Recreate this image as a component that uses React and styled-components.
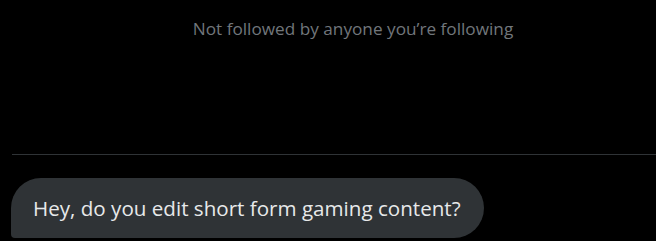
import React from 'react';
import styled, { createGlobalStyle } from 'styled-components';

const GlobalStyle = createGlobalStyle`
  html, body {
    margin: 0;
    padding: 0;
    background: #000;
  }
  body {
    font-family: "Open Sans", "Noto Sans", sans-serif;
    color: #e7e9ea;
  }
`;

const Page = styled.div`
  width: 656px;
  height: 241px;
  display: flex;
  flex-direction: column;
  overflow: hidden;
`;

const Header = styled.div`
  height: 154px;
  display: flex;
  justify-content: center;
  padding-top: 18px;
  padding-left: 50px;
  box-sizing: border-box;
`;

const Notice = styled.p`
  margin: 0;
  font-size: 17.2px;
  line-height: 22px;
  color: #71767b;
`;

const Divider = styled.hr`
  margin: 0 0 0 12px;
  border: none;
  height: 1px;
  background: #2f3336;
`;

const Thread = styled.div`
  padding: 23px 0 0 11px;
  display: flex;
`;

const Bubble = styled.div`
  background: #2f3336;
  color: #e7e9ea;
  height: 60px;
  display: flex;
  align-items: center;
  padding: 0 23px 0 22px;
  border-radius: 30px 30px 30px 4px;
  font-size: 20.6px;
`;

export default function App() {
  return (
    <>
      <GlobalStyle />
      <Page>
        <Header>
          <Notice>Not followed by anyone you’re following</Notice>
        </Header>
        <Divider />
        <Thread>
          <Bubble>Hey, do you edit short form gaming content?</Bubble>
        </Thread>
      </Page>
    </>
  );
}
